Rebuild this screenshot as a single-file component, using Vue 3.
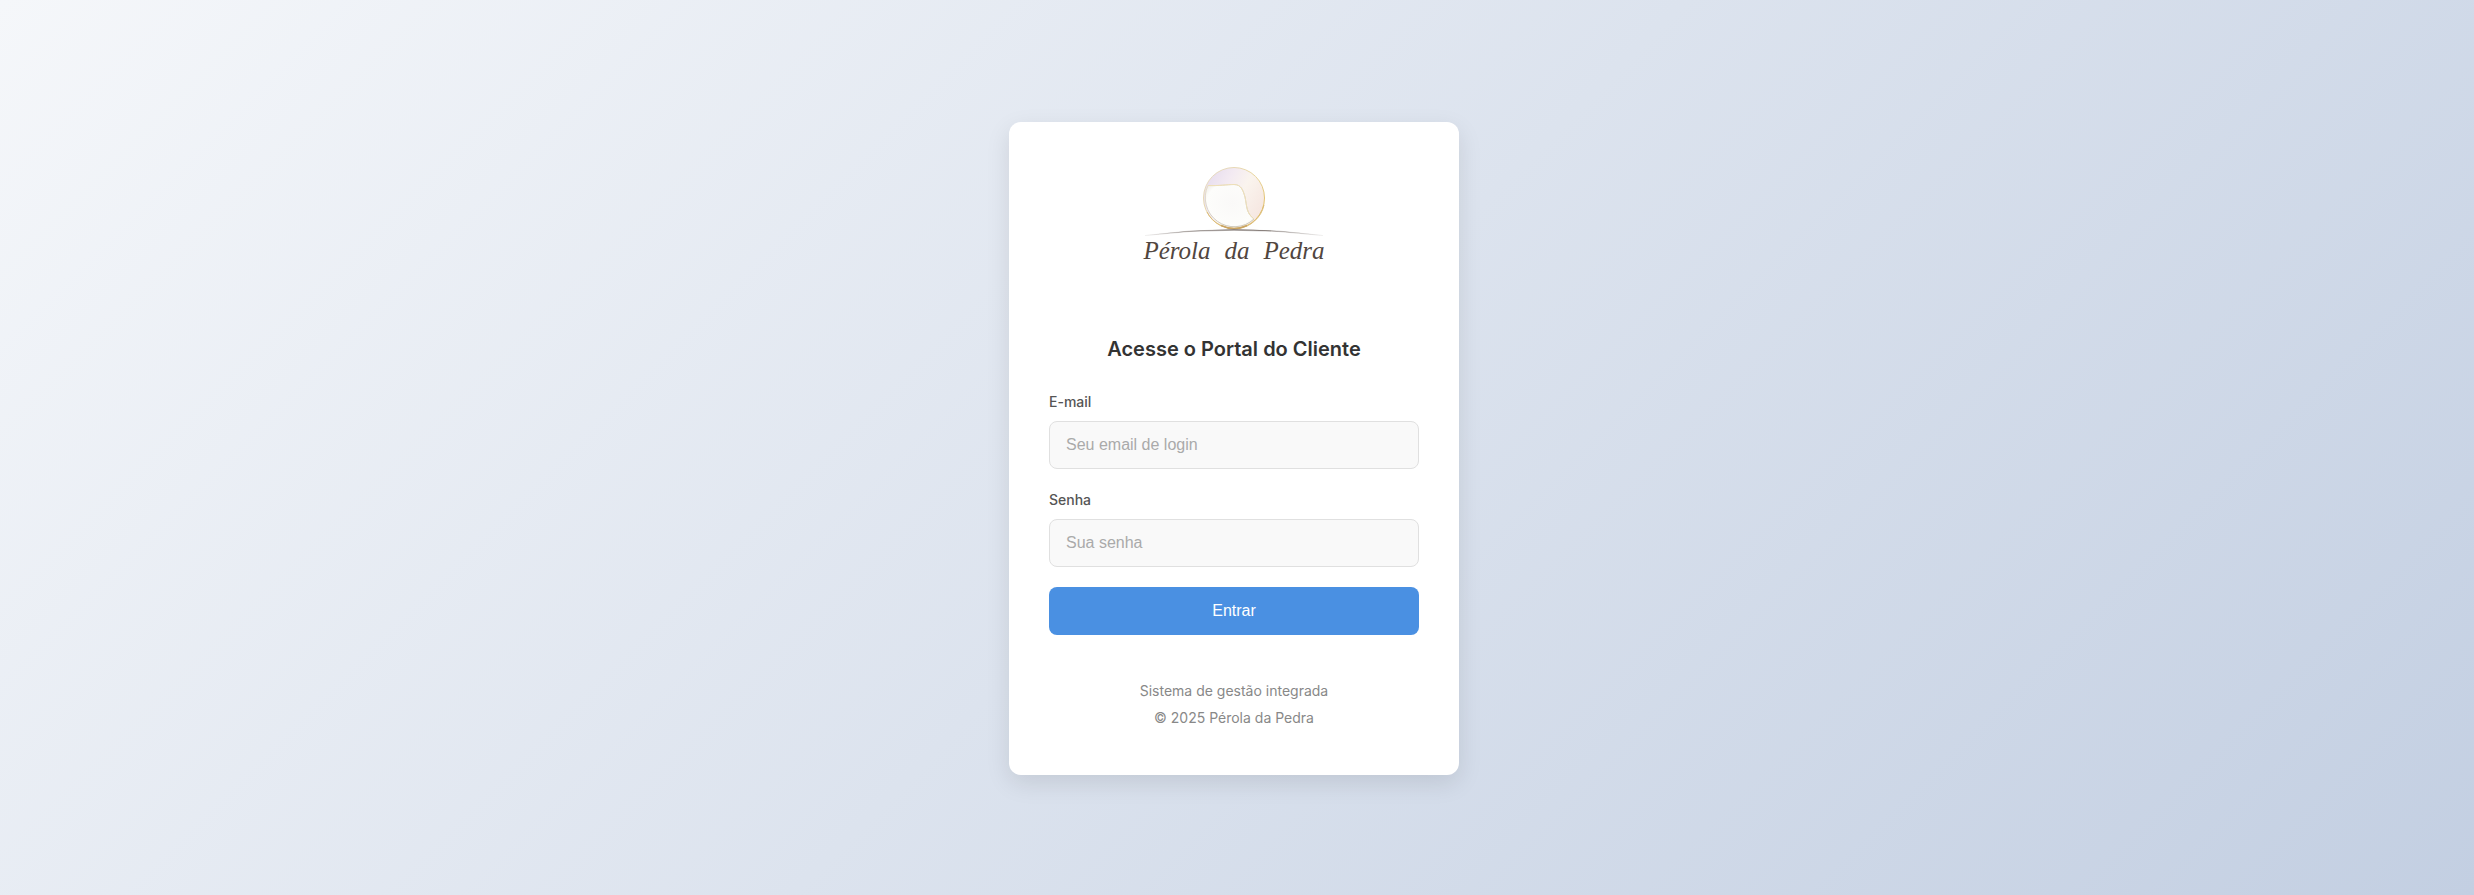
<script setup>
import { ref } from 'vue'

const email = ref('')
const password = ref('')
</script>

<template>
  <main class="page">
    <section class="card">
      <div class="logo">
        <svg class="emblem" viewBox="0 0 190 75" aria-hidden="true">
          <defs>
            <linearGradient id="shell" x1="0" y1="0.2" x2="1" y2="0.8">
              <stop offset="0" stop-color="#e6dcee" />
              <stop offset="0.3" stop-color="#f3eaf2" />
              <stop offset="0.55" stop-color="#faf4ee" />
              <stop offset="1" stop-color="#f5e4de" />
            </linearGradient>
            <linearGradient id="rim" x1="0" y1="0" x2="1" y2="1">
              <stop offset="0" stop-color="#e6dccd" />
              <stop offset="0.5" stop-color="#e8d59c" />
              <stop offset="1" stop-color="#dcb24a" />
            </linearGradient>
            <linearGradient id="inner" x1="0" y1="0" x2="0.4" y2="1">
              <stop offset="0" stop-color="#e9dfc4" />
              <stop offset="0.5" stop-color="#d9d4cc" />
              <stop offset="1" stop-color="#cfcabb" />
            </linearGradient>
            <linearGradient id="horizon" x1="0" y1="0" x2="1" y2="0">
              <stop offset="0" stop-color="#5c504b" stop-opacity="0.15" />
              <stop offset="0.2" stop-color="#5c504b" stop-opacity="0.6" />
              <stop offset="0.5" stop-color="#5c504b" />
              <stop offset="0.8" stop-color="#5c504b" stop-opacity="0.6" />
              <stop offset="1" stop-color="#5c504b" stop-opacity="0.15" />
            </linearGradient>
            <radialGradient id="pearl" cx="0.55" cy="0.45" r="0.65">
              <stop offset="0" stop-color="#faf9f8" />
              <stop offset="0.8" stop-color="#fdfdfb" />
              <stop offset="1" stop-color="#f0eeea" />
            </radialGradient>
          </defs>
          <circle cx="95" cy="36" r="30.5" fill="url(#shell)" stroke="url(#rim)" stroke-width="1" />
          <path
            d="M69 23.500 C80 24 88 22.500 95 22.500 C102 22.500 104 28 106 35 C108 44 107 51 115 57 A29 29 0 0 1 69 23.500 Z"
            fill="url(#pearl)" stroke="url(#inner)" stroke-width="1"
          />
          <path d="M69 23.500 C80 24 88 22.500 95 22.500 C102 22.500 104 28 106 35 C108 44 107 51 115 57" fill="none" stroke="#efe0b8" stroke-width="1" />
          <path d="M68 50 A30.500 30.500 0 0 0 125 43" fill="none" stroke="#dcbc78" stroke-width="1" />
          <path d="M82 63.500 A30.500 30.500 0 0 0 108 63.500" fill="none" stroke="#c9a463" stroke-width="1.500" />
          <path d="M6 73.500 Q95 61.500 184 73.500 Q95 63 6 73.500 Z" fill="url(#horizon)" stroke="url(#horizon)" stroke-width="0.300" />
        </svg>
        <div class="wordmark"><span>Pérola</span> <span>da</span> <span>Pedra</span></div>
      </div>

      <h1>Acesse o Portal do Cliente</h1>

      <form @submit.prevent>
        <div class="field">
          <label for="email">E-mail</label>
          <input id="email" v-model="email" type="email" placeholder="Seu email de login" />
        </div>
        <div class="field">
          <label for="password">Senha</label>
          <input id="password" v-model="password" type="password" placeholder="Sua senha" />
        </div>
        <button type="submit">Entrar</button>
      </form>

      <footer>
        <p>Sistema de gestão integrada</p>
        <p>© 2025 Pérola da Pedra</p>
      </footer>
    </section>
  </main>
</template>

<style>
body {
  margin: 0;
}
</style>

<style scoped>
.page {
  box-sizing: border-box;
  min-height: 100vh;
  padding: 22px 26px 20px 20px;
  display: flex;
  align-items: center;
  justify-content: center;
  background: linear-gradient(135deg, #f5f7fa 0%, #c3cfe2 100%);
  font-family: Inter, "Liberation Sans", sans-serif;
  line-height: 22px;
  color: #333;
}
.card {
  box-sizing: border-box;
  width: 100%;
  max-width: 450px;
  padding: 40px;
  background: #fff;
  border-radius: 12px;
  box-shadow: 0 8px 24px rgba(0, 0, 0, 0.1);
}
.logo {
  display: flex;
  flex-direction: column;
  align-items: center;
  gap: 2px;
  padding-bottom: 70px;
}
.emblem {
  display: block;
  width: 190px;
  height: 75px;
}
.wordmark {
  display: flex;
  gap: 14px;
  font: italic 25px/24px "Liberation Serif", serif;
  color: #51463f;
}
h1 {
  margin: 0 0 26px;
  font-size: 20px;
  line-height: 32px;
  font-weight: 600;
  text-align: center;
}
.field {
  margin-bottom: 20px;
}
label {
  display: block;
  margin-bottom: 8px;
  font-size: 14px;
  font-weight: 500;
  color: #555;
}
input,
button {
  display: block;
  box-sizing: border-box;
  width: 100%;
  height: 48px;
  border-radius: 8px;
  font-family: "Liberation Sans", Arial, sans-serif;
  font-size: 16px;
}
input {
  padding: 0 16px;
  border: 1px solid #e0e0e0;
  background: #f9f9f9;
  color: #333;
}
input::placeholder {
  color: #aaa;
}
button {
  padding: 0;
  border: 0;
  background: #4a90e2;
  color: #fff;
  cursor: pointer;
}
footer {
  margin-top: 40px;
  padding: 5px 0 6px;
  font-size: 14px;
  text-align: center;
  color: #888;
}
footer p {
  margin: 0;
}
footer p + p {
  margin-top: 5px;
}
</style>
